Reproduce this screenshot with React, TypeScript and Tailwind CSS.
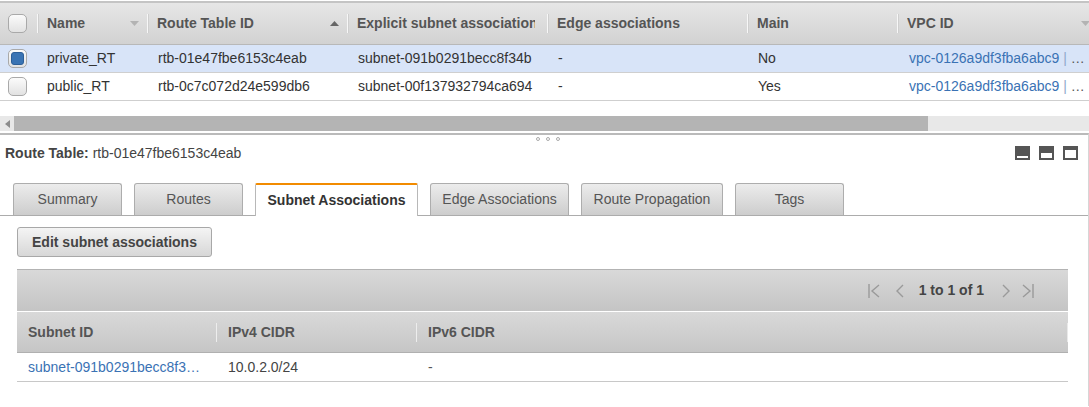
import React from 'react';

interface Col {
  label: string;
  w: string;
  labelW: string;
  sort?: 'down' | 'up';
}

const cols: Col[] = [
  { label: 'Name', w: 'w-[110px]', labelW: 'w-[80px]', sort: 'down' },
  { label: 'Route Table ID', w: 'w-[200px]', labelW: 'w-[170px]', sort: 'up' },
  { label: 'Explicit subnet association', w: 'w-[200px]', labelW: 'w-[178px]' },
  { label: 'Edge associations', w: 'w-[200px]', labelW: 'w-[180px]' },
  { label: 'Main', w: 'w-[150px]', labelW: 'w-[130px]' },
  { label: 'VPC ID', w: 'flex-1', labelW: 'flex-1', sort: 'down' },
];

const rows = [
  { name: 'private_RT', id: 'rtb-01e47fbe6153c4eab', subnet: 'subnet-091b0291becc8f34b', edge: '-', main: 'No', vpc: 'vpc-0126a9df3fba6abc9', selected: true },
  { name: 'public_RT', id: 'rtb-0c7c072d24e599db6', subnet: 'subnet-00f137932794ca694', edge: '-', main: 'Yes', vpc: 'vpc-0126a9df3fba6abc9', selected: false },
];

const tabs = [
  { label: 'Summary', w: 'w-[109px]' },
  { label: 'Routes', w: 'w-[109px]' },
  { label: 'Subnet Associations', w: 'w-[163px]', active: true },
  { label: 'Edge Associations', w: 'w-[139px]' },
  { label: 'Route Propagation', w: 'w-[142px]' },
  { label: 'Tags', w: 'w-[109px]' },
];

function Checkbox({ checked }: { checked?: boolean }) {
  return (
    <div className="w-[19px] h-[19px] rounded-[5px] border border-[#a9a9a9] bg-linear-to-b from-[#fbfbfb] to-[#e2e2e2] flex items-center justify-center">
      {checked && <div className="w-[13px] h-[13px] rounded-[3px] bg-[#3a74b4] border border-[#2d5f98]" />}
    </div>
  );
}

function SortArrow({ dir }: { dir: 'down' | 'up' }) {
  return (
    <svg width="9" height="5" viewBox="0 0 9 5" className="shrink-0">
      {dir === 'down' ? (
        <path d="M0 0 L9 0 L4.5 5 Z" fill="#b3b3b3" />
      ) : (
        <path d="M0 5 L9 5 L4.5 0 Z" fill="#666" />
      )}
    </svg>
  );
}

function PagerIcon({ kind }: { kind: 'first' | 'prev' | 'next' | 'last' }) {
  const stroke = '#9a9a9a';
  return (
    <svg width="14" height="16" viewBox="0 0 14 16" fill="none" stroke={stroke} strokeWidth="1.4">
      {kind === 'first' && (<><path d="M2 1 V15" /><path d="M12 2 L5 8 L12 14" /></>)}
      {kind === 'prev' && <path d="M10 2 L4 8 L10 14" />}
      {kind === 'next' && <path d="M4 2 L10 8 L4 14" />}
      {kind === 'last' && (<><path d="M2 2 L9 8 L2 14" /><path d="M12 1 V15" /></>)}
    </svg>
  );
}

function PanelIcon({ bar }: { bar: string }) {
  return (
    <div className="w-[15px] h-[14px] bg-[#555] flex items-end justify-center pb-[2px]">
      <div className={`w-[11px] bg-white ${bar}`} />
    </div>
  );
}

export default function App() {
  return (
    <div className="w-[1089px] h-[407px] overflow-hidden bg-white font-['Liberation_Sans',Arial,sans-serif] text-[14px] text-[#333]">
      {/* Route tables grid */}
      <div className="mt-px border-t-2 border-[#c4c4c4]">
        <div className="flex h-[42px] items-center bg-linear-to-b from-[#e6e6e6] to-[#d2d2d2] border-b border-[#b8b8b8]">
          <div className="w-[37px] pl-[8px] flex items-center">
            <Checkbox />
          </div>
          {cols.map((c, i) => (
            <div key={i} className={`${c.w} flex items-center h-full`}>
              <div className="w-px h-[19px] bg-[#f7f7f7] shadow-[1px_0_0_#cfcfcf]" />
              <div className={`ml-[9px] ${c.labelW} overflow-hidden whitespace-nowrap font-bold text-[#555]`}>{c.label}</div>
              {c.sort && (
                <div className={c.label === 'VPC ID' ? 'ml-auto mr-[-1px]' : 'ml-auto mr-[8px]'}>
                  <SortArrow dir={c.sort} />
                </div>
              )}
            </div>
          ))}
        </div>
        {rows.map((r, i) => (
          <div key={i} className={`flex h-[28px] items-center border-b border-[#cfcfcf] ${r.selected ? 'bg-[#d8e4f8]' : 'bg-white'}`}>
            <div className="w-[37px] pl-[8px] flex items-center">
              <Checkbox checked={r.selected} />
            </div>
            <div className="w-[110px] pl-[10px] whitespace-nowrap">{r.name}</div>
            <div className="w-[200px] pl-[11px] whitespace-nowrap">{r.id}</div>
            <div className="w-[200px] pl-[11px] whitespace-nowrap">{r.subnet}</div>
            <div className="w-[200px] pl-[11px] whitespace-nowrap">{r.edge}</div>
            <div className="w-[150px] pl-[11px] whitespace-nowrap">{r.main}</div>
            <div className="flex-1 pl-[12px] whitespace-nowrap text-[#3a72b4]">
              {r.vpc} <span className="text-[#8fa8cc]">|</span> <span className="text-[#555]">…</span>
            </div>
          </div>
        ))}
        <div className="h-[15px]" />
        {/* horizontal scrollbar */}
        <div className="flex h-[15px] items-center bg-[#e8e8e8]">
          <div className="w-[14px] flex justify-center">
            <svg width="5" height="8" viewBox="0 0 5 8"><path d="M5 0 L5 8 L0 4 Z" fill="#8c8c8c" /></svg>
          </div>
          <div className="w-[914px] h-[15px] bg-[#b4b4b4]" />
        </div>
      </div>

      {/* Details panel */}
      <div className="mt-[2px] border-t-2 border-[#bababa] border-r border-r-[#d6d6d6] h-[273px]">
        <div className="flex justify-center gap-[6px] h-[7px] items-center pl-[8px]">
          {[0, 1, 2].map((d) => (
            <div key={d} className="w-[4px] h-[4px] rounded-full border border-[#aaa]" />
          ))}
        </div>
        <div className="flex items-center justify-between h-[22px] pl-[5px] pr-[10px]">
          <div className="whitespace-nowrap">
            <span className="font-bold text-[#444]">Route Table:</span> <span className="text-[#444]">rtb-01e47fbe6153c4eab</span>
          </div>
          <div className="flex gap-[9px]">
            <PanelIcon bar="h-[2px]" />
            <PanelIcon bar="h-[5px]" />
            <PanelIcon bar="h-[8px]" />
          </div>
        </div>

        {/* Tabs */}
        <div className="mt-[19px] flex items-end gap-[12px] pl-[13px] border-b border-[#acacac] h-[33px]">
          {tabs.map((t, i) =>
            t.active ? (
              <div key={i} className={`${t.w} h-[33px] -mb-px bg-white border-t-2 border-t-[#f28b00] border-x border-x-[#b8b8b8] rounded-t-[2px] flex items-center justify-center font-bold text-[#333]`}>
                {t.label}
              </div>
            ) : (
              <div key={i} className={`${t.w} h-[32px] bg-linear-to-b from-[#ececec] to-[#cdcdcd] border border-b-0 border-[#adadad] rounded-t-[3px] flex items-center justify-center text-[#555] whitespace-nowrap`}>
                {t.label}
              </div>
            )
          )}
        </div>

        <div className="mt-[11px] ml-[17px] w-[195px] h-[30px] rounded-[3px] border border-[#a8a8a8] bg-linear-to-b from-[#f4f4f4] to-[#d7d7d7] flex items-center justify-center font-bold text-[#444]">
          Edit subnet associations
        </div>

        {/* Subnet associations table */}
        <div className="mt-[12px] ml-[17px] w-[1051px] border-t border-[#b3b3b3]">
          <div className="h-[42px] flex items-center justify-end pr-[33px] bg-linear-to-b from-[#d9d9d9] to-[#c4c4c4] border-b border-white">
            <div className="flex items-center">
              <PagerIcon kind="first" />
              <div className="ml-[12px]"><PagerIcon kind="prev" /></div>
              <span className="ml-[12px] font-bold text-[#444]">1 to 1 of 1</span>
              <div className="ml-[15px]"><PagerIcon kind="next" /></div>
              <div className="ml-[8px]"><PagerIcon kind="last" /></div>
            </div>
          </div>
          <div className="h-[41px] flex items-center bg-linear-to-b from-[#d9d9d9] to-[#c6c6c6] border-b border-[#b0b0b0]">
            <div className="w-[199px] pl-[11px] font-bold text-[#555]">Subnet ID</div>
            <div className="w-px h-[19px] bg-[#ededed]" />
            <div className="w-[199px] pl-[11px] font-bold text-[#555]">IPv4 CIDR</div>
            <div className="w-px h-[19px] bg-[#ededed]" />
            <div className="flex-1 pl-[11px] font-bold text-[#555]">IPv6 CIDR</div>
            <div className="w-px h-[19px] bg-[#e9e9e9]" />
          </div>
          <div className="h-[29px] flex items-center border-b border-[#c8c8c8]">
            <div className="w-[200px] pl-[11px] whitespace-nowrap text-[#3a72b4]">subnet-091b0291becc8f3…</div>
            <div className="w-[200px] pl-[11px] text-[#444]">10.0.2.0/24</div>
            <div className="flex-1 pl-[11px] text-[#555]">-</div>
          </div>
        </div>
      </div>
    </div>
  );
}
